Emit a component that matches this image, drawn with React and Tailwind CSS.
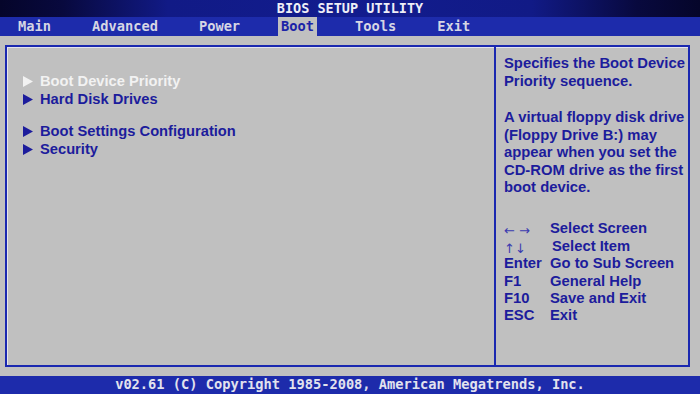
const tabs = ['Main', 'Advanced', 'Power', 'Boot', 'Tools', 'Exit'];

const items = [
  { label: 'Boot Device Priority', active: true },
  { label: 'Hard Disk Drives' },
  { label: 'Boot Settings Configuration', gap: true },
  { label: 'Security' },
];

const keys = [
  { k: '←→', d: 'Select Screen', arrow: true, wide: true },
  { k: '↑↓', d: 'Select Item', arrow: true, shift: true },
  { k: 'Enter', d: 'Go to Sub Screen' },
  { k: 'F1', d: 'General Help' },
  { k: 'F10', d: 'Save and Exit' },
  { k: 'ESC', d: 'Exit' },
];

function Arrow({ active }) {
  return (
    <svg width="10" height="11" viewBox="0 0 10 11" className="shrink-0">
      <polygon points="0,0 10,5.5 0,11" fill={active ? '#f2f2f2' : '#1c1c9c'} />
    </svg>
  );
}

export default function App() {
  return (
    <div className="w-[700px] h-[394px] flex flex-col bg-[#c0c0c0] overflow-hidden">
      <div className="h-[17px] flex items-center justify-center bg-[linear-gradient(90deg,#05052a_0%,#08093e_9%,#111a86_24%,#121c8e_50%,#111a86_76%,#08093e_91%,#05052a_100%)]">
        <span className="font-['DejaVu_Sans_Mono',monospace] font-bold text-[13.5px] leading-none text-[#eeeef6]">
          BIOS SETUP UTILITY
        </span>
      </div>

      <div className="h-[19px] flex items-stretch gap-[35px] pl-[15px] bg-[#1d2bab]">
        {tabs.map((t) => (
          <div
            key={t}
            className={`flex items-center px-[3px] font-['DejaVu_Sans_Mono',monospace] font-bold text-[13.7px] leading-none ${
              t === 'Boot' ? 'bg-[#c0c0c0] text-[#1c24a8]' : 'text-[#d6d6e4]'
            }`}
          >
            {t}
          </div>
        ))}
      </div>

      <div className="flex-1 pt-[9px] pb-[9px] pl-[5px] pr-[10px]">
        <div className="h-full flex border-2 border-[#1a28b0] shadow-[inset_1px_1px_0_#e4e4ec] font-['Liberation_Sans',Arial,sans-serif] font-bold text-[#1c1c9c]">
          <div className="w-[487px] pt-[25px] pl-[16px] text-[14.7px] leading-[18px]">
            {items.map((it) => (
              <div
                key={it.label}
                className={`flex items-center gap-[7px] ${it.gap ? 'mt-[14px]' : ''} ${
                  it.active ? 'text-[#f2f2f2]' : ''
                }`}
              >
                <Arrow active={it.active} />
                <span>{it.label}</span>
              </div>
            ))}
          </div>

          <div className="w-[2px] bg-[#1a28b0]" />

          <div className="flex-1 pt-[8px] pl-[8px] text-[14.8px] leading-[17.5px]">
            <p>
              Specifies the Boot Device
              <br />
              Priority sequence.
            </p>
            <p className="mt-[19px]">
              A virtual floppy disk drive
              <br />
              (Floppy Drive B:) may
              <br />
              appear when you set the
              <br />
              CD-ROM drive as the first
              <br />
              boot device.
            </p>
            <div className="mt-[24px]">
              {keys.map((r) => (
                <div key={r.d} className="flex h-[17.4px] items-center">
                  <span
                    className={`w-[46px] ${
                      r.arrow ? "font-['DejaVu_Sans',sans-serif] font-normal text-[13px] text-[#3a3ab0] pt-[4px]" : ''
                    } ${r.wide ? 'tracking-[4px]' : ''}`}
                  >
                    {r.k}
                  </span>
                  <span className={r.shift ? 'ml-[2px]' : ''}>{r.d}</span>
                </div>
              ))}
            </div>
          </div>
        </div>
      </div>

      <div className="h-[18px] flex items-center justify-center bg-[#1d2bab]">
        <span className="font-['DejaVu_Sans_Mono',monospace] font-bold text-[13.7px] leading-none text-[#e2e2ee]">
          v02.61 (C) Copyright 1985-2008, American Megatrends, Inc.
        </span>
      </div>
    </div>
  );
}
